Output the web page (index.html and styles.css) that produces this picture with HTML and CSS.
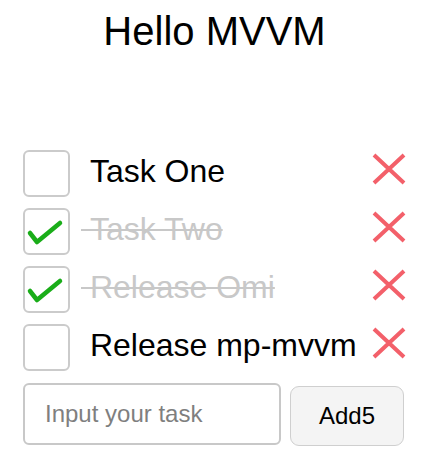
FILE: index.html
```html
<!DOCTYPE html>
<html>
<head>
<meta charset="utf-8">
<link rel="stylesheet" href="styles.css">
</head>
<body>
<div class="app">
  <h1 class="title">Hello MVVM</h1>
  <ul class="todo-list">
    <li class="todo">
      <span class="box"></span>
      <span class="label">&nbsp;Task One</span>
      <svg class="del" width="34" height="32" viewBox="0 0 34 32"><path d="M2 2L32 30M32 2L2 30"/></svg>
    </li>
    <li class="todo done">
      <span class="box"><svg class="check" width="43" height="43" viewBox="0 0 43 43"><path d="M5 23L12 32L35 13"/></svg></span>
      <span class="label">&nbsp;Task Two</span>
      <svg class="del" width="34" height="32" viewBox="0 0 34 32"><path d="M2 2L32 30M32 2L2 30"/></svg>
    </li>
    <li class="todo done">
      <span class="box"><svg class="check" width="43" height="43" viewBox="0 0 43 43"><path d="M5 23L12 32L35 13"/></svg></span>
      <span class="label">&nbsp;Release Omi</span>
      <svg class="del" width="34" height="32" viewBox="0 0 34 32"><path d="M2 2L32 30M32 2L2 30"/></svg>
    </li>
    <li class="todo">
      <span class="box"></span>
      <span class="label">&nbsp;Release mp-mvvm</span>
      <svg class="del" width="34" height="32" viewBox="0 0 34 32"><path d="M2 2L32 30M32 2L2 30"/></svg>
    </li>
  </ul>
  <div class="add-row">
    <input class="task-input" type="text" placeholder="Input your task">
    <button class="add-btn">Add5</button>
  </div>
</div>
</body>
</html>
```
FILE: styles.css
```css
html, body {
  margin: 0;
  padding: 0;
  background: #fff;
}
body {
  font-family: "Liberation Sans", Arial, sans-serif;
  color: #000;
}
.app {
  padding: 8px 22px 0 23px;
}
.title {
  margin: 0;
  font-size: 40px;
  font-weight: normal;
  line-height: 46px;
  text-align: center;
}
.todo-list {
  list-style: none;
  margin: 96px 0 0 0;
  padding: 0;
  display: flex;
  flex-direction: column;
  gap: 11px;
}
.todo {
  display: flex;
  align-items: flex-start;
  height: 47px;
}
.box {
  box-sizing: border-box;
  width: 47px;
  height: 47px;
  flex: none;
  border: 2px solid #cbcbcb;
  border-radius: 6px;
  background: #fff;
  display: flex;
}
.check path {
  fill: none;
  stroke: #1aad19;
  stroke-width: 4.5;
  stroke-linecap: round;
  stroke-linejoin: round;
}
.label {
  flex: 1;
  margin-left: 11px;
  font-size: 32px;
  line-height: 42px;
  white-space: nowrap;
}
.done .label {
  color: #c8c8c8;
  text-decoration: line-through;
  text-decoration-thickness: 2px;
}
.del {
  flex: none;
  margin-top: 3px;
}
.del path {
  fill: none;
  stroke: #f3606a;
  stroke-width: 4;
}
.add-row {
  display: flex;
  align-items: flex-start;
  margin-top: 12px;
}
.task-input {
  box-sizing: border-box;
  width: 258px;
  height: 62px;
  border: 2px solid #c8c8c8;
  border-radius: 6px;
  padding: 0 20px;
  font-family: "Liberation Sans", Arial, sans-serif;
  font-size: 24px;
  color: #000;
  outline: none;
}
.task-input::placeholder {
  color: #7f7f7f;
}
.add-btn {
  box-sizing: border-box;
  margin: 3px 0 0 9px;
  width: 114px;
  height: 60px;
  background: #f4f4f4;
  border: 1px solid #cfcfcf;
  border-radius: 9px;
  font-family: "Liberation Sans", Arial, sans-serif;
  font-size: 24px;
  color: #000;
  padding: 0;
}
```
